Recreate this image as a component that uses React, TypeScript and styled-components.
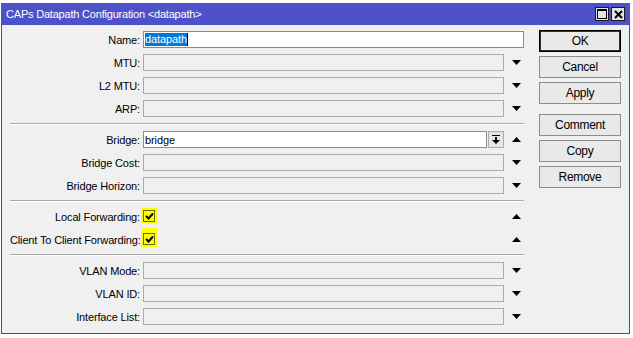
import React from "react";
import styled, { createGlobalStyle } from "styled-components";

const GlobalStyle = createGlobalStyle`
  html, body {
    margin: 0;
    padding: 0;
    background: #ffffff;
  }
  body {
    font-family: "Liberation Sans", Arial, sans-serif;
    font-size: 11px;
    color: #000;
  }
`;

type FieldRow = {
  label: string;
  value?: string;
  arrow?: "up" | "down";
};

const topRows: FieldRow[] = [
  { label: "MTU:", arrow: "down" },
  { label: "L2 MTU:", arrow: "down" },
  { label: "ARP:", arrow: "down" },
];

const bridgeRows: FieldRow[] = [
  { label: "Bridge Cost:", arrow: "down" },
  { label: "Bridge Horizon:", arrow: "down" },
];

const vlanRows: FieldRow[] = [
  { label: "VLAN Mode:", arrow: "down" },
  { label: "VLAN ID:", arrow: "down" },
  { label: "Interface List:", arrow: "down" },
];

const Arrow = ({ dir }: { dir: "up" | "down" }) => (
  <svg width="9" height="5" viewBox="0 0 9 5">
    {dir === "down" ? (
      <polygon points="0,0 9,0 4.5,5" fill="#000" />
    ) : (
      <polygon points="0,5 9,5 4.5,0" fill="#000" />
    )}
  </svg>
);

const Check = () => (
  <svg width="9" height="8" viewBox="0 0 9 8">
    <path d="M1 4 L3.5 6.5 L8 1.5" stroke="#000" strokeWidth="2" fill="none" />
  </svg>
);

const App = () => {
  const renderRow = (r: FieldRow) => (
    <Row key={r.label}>
      <Label>{r.label}</Label>
      <Field>{r.value}</Field>
      <ArrowCell>{r.arrow && <Arrow dir={r.arrow} />}</ArrowCell>
    </Row>
  );

  return (
    <>
      <GlobalStyle />
      <Window>
        <TitleBar>
          <TitleText>CAPs Datapath Configuration &lt;datapath&gt;</TitleText>
          <TitleButtons>
            <TitleButton>
              <svg width="10" height="10" viewBox="0 0 10 10">
                <rect x="0.5" y="0.5" width="9" height="9" stroke="#000" fill="none" />
                <rect x="0" y="0" width="10" height="2" fill="#000" />
              </svg>
            </TitleButton>
            <TitleButton>
              <svg width="9" height="9" viewBox="0 0 9 9">
                <path d="M1 1 L8 8 M8 1 L1 8" stroke="#000" strokeWidth="2" />
              </svg>
            </TitleButton>
          </TitleButtons>
        </TitleBar>

        <Body>
          <Form>
            <Row>
              <Label>Name:</Label>
              <Field $active $wide>
                <Selected>datapath</Selected>
                <Caret />
              </Field>
            </Row>
            {topRows.map(renderRow)}

            <Separator />

            <Row>
              <Label>Bridge:</Label>
              <FieldGroup>
                <Field $active>bridge</Field>
                <PickButton>
                  <svg width="8" height="9" viewBox="0 0 8 9">
                    <rect x="0" y="0" width="8" height="1" fill="#000" />
                    <rect x="3" y="2" width="2" height="3" fill="#000" />
                    <polygon points="0,5 8,5 4,9" fill="#000" />
                  </svg>
                </PickButton>
              </FieldGroup>
              <ArrowCell>
                <Arrow dir="up" />
              </ArrowCell>
            </Row>
            {bridgeRows.map(renderRow)}

            <Separator />

            <Row>
              <Label>Local Forwarding:</Label>
              <CheckCell>
                <Highlight>
                  <CheckBox>
                    <Check />
                  </CheckBox>
                </Highlight>
              </CheckCell>
              <ArrowCell>
                <Arrow dir="up" />
              </ArrowCell>
            </Row>
            <Row>
              <Label>Client To Client Forwarding:</Label>
              <CheckCell>
                <Highlight $tall>
                  <CheckBox>
                    <Check />
                  </CheckBox>
                </Highlight>
              </CheckCell>
              <ArrowCell>
                <Arrow dir="up" />
              </ArrowCell>
            </Row>

            <Separator />

            {vlanRows.map(renderRow)}
          </Form>

          <Actions>
            <ButtonGroup>
              <Button $default>OK</Button>
              <Button>Cancel</Button>
              <Button>Apply</Button>
            </ButtonGroup>
            <ButtonGroup>
              <Button>Comment</Button>
              <Button>Copy</Button>
              <Button>Remove</Button>
            </ButtonGroup>
          </Actions>
        </Body>
      </Window>
    </>
  );
};

export default App;

const Window = styled.div`
  margin: 3px 0 0 1px;
  width: 629px;
  height: 331px;
  box-sizing: border-box;
  border: 1px solid #4d4d7a;
  border-top: none;
  background: #f0f0f0;
  display: flex;
  flex-direction: column;
`;

const TitleBar = styled.div`
  height: 22px;
  margin: 0 -1px;
  background: #4d52c8;
  display: flex;
  align-items: center;
  justify-content: space-between;
  padding: 0 5px 0 5px;
`;

const TitleText = styled.div`
  color: #fff;
  font-size: 11px;
  letter-spacing: -0.2px;
`;

const TitleButtons = styled.div`
  display: flex;
  gap: 2px;
`;

const TitleButton = styled.div`
  width: 14px;
  height: 14px;
  box-sizing: border-box;
  border: 1px solid #1c1c1c;
  background: #e4e4e4;
  display: flex;
  align-items: center;
  justify-content: center;
`;

const Body = styled.div`
  flex: 1;
  display: flex;
  gap: 15px;
  padding: 6px 8px 8px 8px;
`;

const Form = styled.div`
  width: 514px;
  display: flex;
  flex-direction: column;
  gap: 6px;
`;

const Row = styled.div`
  display: grid;
  grid-template-columns: 133px 361px 20px;
  height: 17px;
  align-items: center;
`;

const Label = styled.div`
  text-align: right;
  padding-right: 3px;
  letter-spacing: -0.15px;
  white-space: nowrap;
`;

const Field = styled.div<{ $active?: boolean; $wide?: boolean }>`
  grid-column: ${(p) => (p.$wide ? "2 / 4" : "auto")};
  height: 17px;
  box-sizing: border-box;
  border: 1px solid ${(p) => (p.$active ? "#8a8a8a" : "#ababab")};
  background: ${(p) => (p.$active ? "#ffffff" : "#f0f0f0")};
  padding: 0 1px;
  display: flex;
  align-items: center;
  letter-spacing: -0.1px;
  flex: 1;
`;

const Selected = styled.span`
  background: #0078d7;
  color: #fff;
  line-height: 13px;
`;

const Caret = styled.span`
  width: 1px;
  height: 13px;
  background: #000;
`;

const FieldGroup = styled.div`
  display: flex;
  gap: 1px;
`;

const PickButton = styled.div`
  width: 16px;
  height: 17px;
  box-sizing: border-box;
  border: 1px solid #ababab;
  background: #e6e6e6;
  display: flex;
  align-items: center;
  justify-content: center;
`;

const ArrowCell = styled.div`
  display: flex;
  align-items: center;
  justify-content: center;
  padding-left: 4px;
`;

const CheckCell = styled.div`
  display: flex;
  align-items: center;
`;

const Highlight = styled.span<{ $tall?: boolean }>`
  display: inline-flex;
  background: #ffff00;
  padding: ${(p) => (p.$tall ? "5px 2px 2px 2px" : "2px 2px 1px 2px")};
  margin: ${(p) => (p.$tall ? "-4px 0 0 -2px" : "-2px 0 0 -2px")};
  border-top-left-radius: ${(p) => (p.$tall ? "4px" : "0")};
`;

const CheckBox = styled.span`
  width: 12px;
  height: 12px;
  box-sizing: border-box;
  border: 1px solid #6b6b10;
  display: flex;
  align-items: center;
  justify-content: center;
`;

const Separator = styled.div`
  height: 1px;
  background: #a9a9a9;
  border-bottom: 1px solid #ffffff;
`;

const Actions = styled.div`
  width: 82px;
  display: flex;
  flex-direction: column;
  gap: 10px;
  margin-top: -1px;
`;

const ButtonGroup = styled.div`
  display: flex;
  flex-direction: column;
  gap: 4px;
`;

const Button = styled.div<{ $default?: boolean }>`
  height: 22px;
  box-sizing: border-box;
  border: 1px solid ${(p) => (p.$default ? "#000" : "#8c8c8c")};
  box-shadow: ${(p) => (p.$default ? "inset 0 0 0 1px #303030" : "none")};
  background: #e9e9e9;
  display: flex;
  align-items: center;
  justify-content: center;
  font-size: 12px;
  letter-spacing: -0.3px;
`;
